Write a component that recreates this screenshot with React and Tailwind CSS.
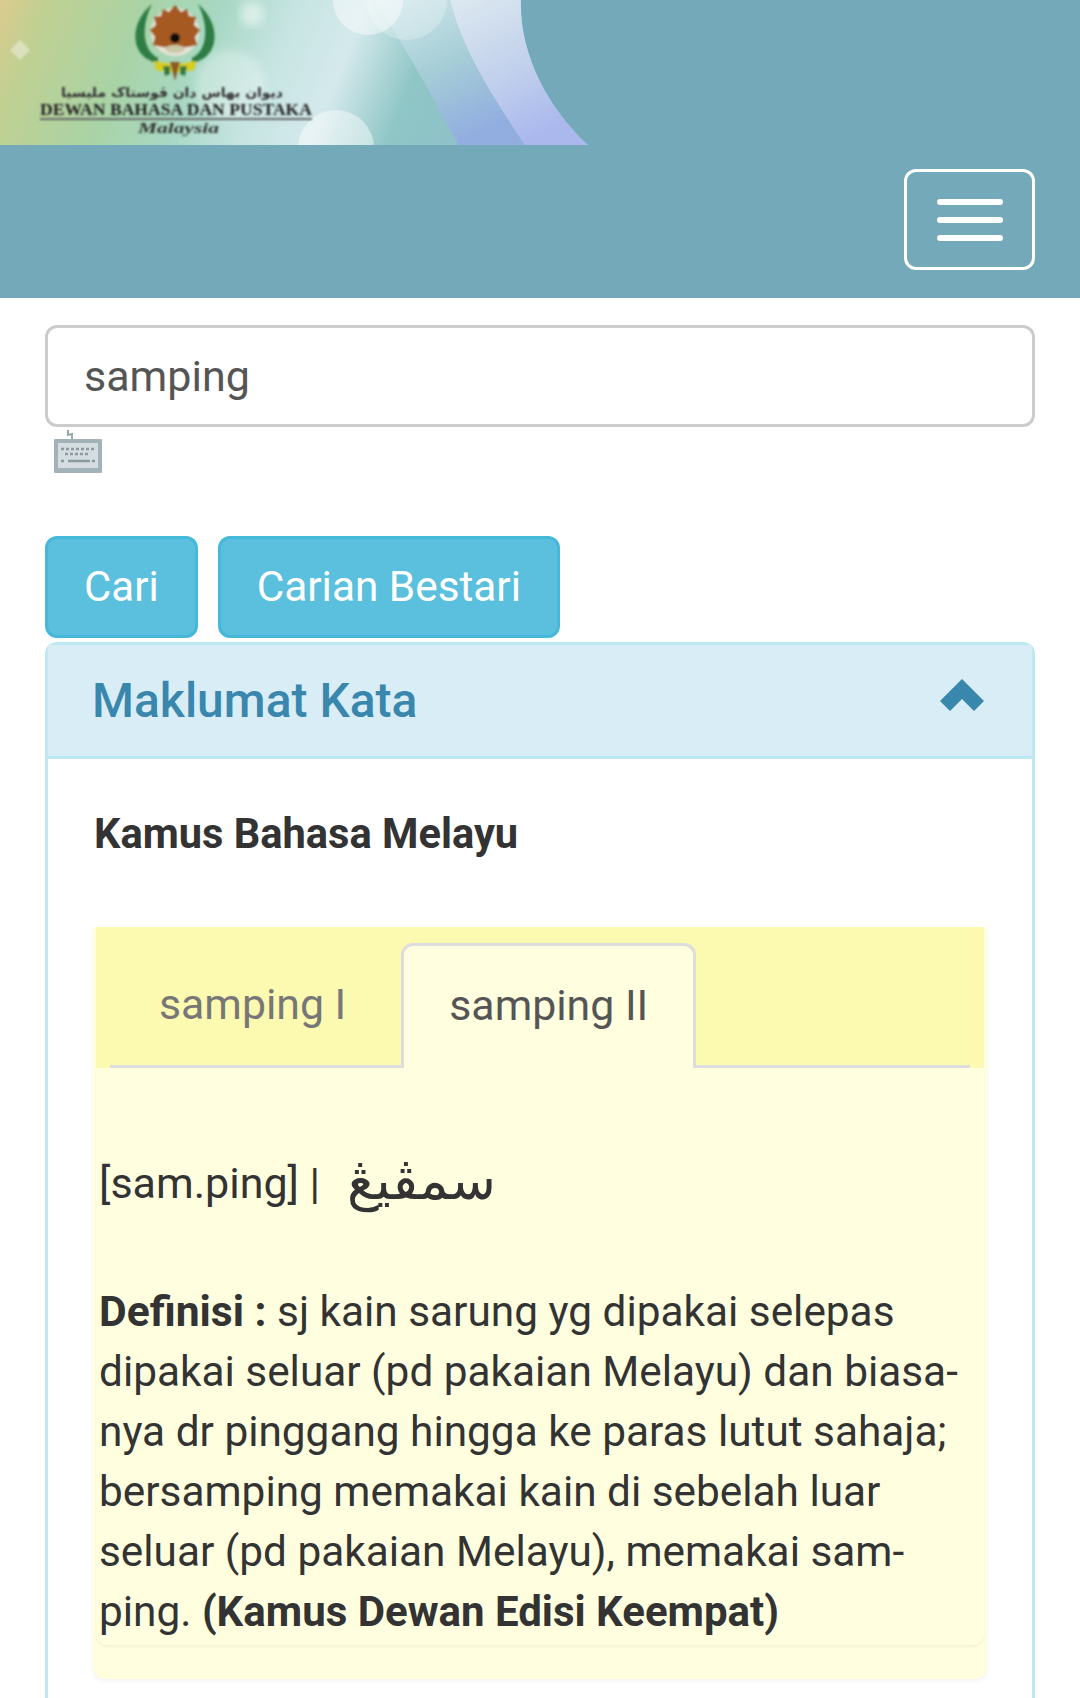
const Banner = () => (
  <svg width="588" height="145" viewBox="0 0 588 145" className="block">
    <defs>
      <linearGradient id="bg" x1="0" y1="0" x2="1" y2="0.1">
        <stop offset="0" stopColor="#dccb8e" />
        <stop offset="0.08" stopColor="#c0d092" />
        <stop offset="0.25" stopColor="#a9d3a6" />
        <stop offset="0.38" stopColor="#a8d8c4" />
        <stop offset="0.5" stopColor="#c6e4e2" />
        <stop offset="0.62" stopColor="#d5e9ec" />
        <stop offset="0.75" stopColor="#8fc6c6" />
        <stop offset="1" stopColor="#8fbccc" />
      </linearGradient>
      <linearGradient id="wave" x1="0" y1="0" x2="0.5" y2="1">
        <stop offset="0" stopColor="#dde9f0" />
        <stop offset="0.6" stopColor="#c0cfec" />
        <stop offset="1" stopColor="#aab8ee" />
      </linearGradient>
      <linearGradient id="wave2" x1="0" y1="0" x2="0.5" y2="1">
        <stop offset="0" stopColor="#d3e9ec" />
        <stop offset="0.55" stopColor="#a5cdd6" />
        <stop offset="1" stopColor="#92aee0" />
      </linearGradient>
      <filter id="soft"><feGaussianBlur stdDeviation="0.8" /></filter>
      <filter id="softer"><feGaussianBlur stdDeviation="5" /></filter>
    </defs>
    <path d="M0 0H521C519 50 545 105 588 145H0Z" fill="url(#bg)" />
    <path d="M375 0H450C462 50 495 100 525 145H458C430 90 400 40 375 0Z" fill="url(#wave2)" />
    <path d="M450 0H521C519 50 545 105 588 145H525C495 100 462 50 450 0Z" fill="url(#wave)" />
    <circle cx="368" cy="0" r="35" fill="#fff" opacity="0.45" />
    <circle cx="407" cy="0" r="40" fill="#fff" opacity="0.25" />
    <circle cx="336" cy="148" r="38" fill="#fff" opacity="0.45" />
    <circle cx="252" cy="14" r="12" fill="#fff" opacity="0.5" filter="url(#softer)" />
    <circle cx="230" cy="85" r="35" fill="#fff" opacity="0.3" filter="url(#softer)" />
    <path d="M20 40L30 50L20 60L10 50Z" fill="#fff" opacity="0.4" filter="url(#soft)" />
    <g filter="url(#soft)">
      <path d="M152 4C128 24 130 58 158 63L158 58C142 50 141 26 152 4Z" fill="#2f7d45" />
      <path d="M198 4C222 24 220 58 192 63L192 58C208 50 209 26 198 4Z" fill="#2f7d45" />
      <circle cx="175" cy="32" r="24" fill="#e8e4d6" />
      <path d="M175 5L181 12L187 9L189 16L196 17L194 25L200 30L195 37L197 45L188 47L175 48L162 47L153 45L155 37L150 30L156 25L154 17L161 16L163 9L169 12Z" fill="#a65a22" />
      <circle cx="175" cy="38" r="5" fill="#111" />
      <ellipse cx="175" cy="49" rx="10" ry="4" fill="#c9c8a8" />
      <path d="M154 61L170 64L180 64L196 61L194 70L180 72L170 72L156 70Z" fill="#d8cc1c" />
      <path d="M170 62H180L175 81Z" fill="#8a5a2a" />
      <path d="M163 66L170 66L170 74L165 76ZM187 66L180 66L180 74L185 76Z" fill="#2f7d45" />
      <text x="61" y="97" textLength="222" lengthAdjust="spacingAndGlyphs" fontFamily="DejaVu Sans" fontWeight="700" fontSize="13" fill="#333">ديوان بهاس دان ڤوستاک مليسيا</text>
      <text x="40" y="115" textLength="272" lengthAdjust="spacingAndGlyphs" fontFamily="Liberation Serif" fontWeight="700" fontSize="16" fill="#222">DEWAN BAHASA DAN PUSTAKA</text>
      <rect x="40" y="118" width="272" height="2" fill="#666" />
      <text x="138" y="133" textLength="81" lengthAdjust="spacingAndGlyphs" fontFamily="Liberation Serif" fontStyle="italic" fontWeight="700" fontSize="15" fill="#333">Malaysia</text>
    </g>
  </svg>
);

const KeyboardIcon = () => (
  <svg width="48" height="43" viewBox="0 0 48 43" className="block">
    <path d="M18 9V4L14 5V0" fill="none" stroke="#9aa9ae" strokeWidth="2" />
    <rect x="0" y="9" width="48" height="34" rx="1" fill="#a3b2b8" />
    <rect x="4" y="13" width="40" height="25" fill="#d5dde0" />
    <path d="M7 19H41M11 24H36" stroke="#8b9a9f" strokeWidth="2.5" strokeDasharray="3 2" />
    <path d="M7 31H10M14 31H36M38 31H41" stroke="#8b9a9f" strokeWidth="2.5" />
  </svg>
);

export default function App() {
  return (
    <div className="h-[1698px] overflow-hidden bg-white font-['Roboto',sans-serif] text-[42.35px] text-[#333]">
      <header className="h-[298px] bg-[#73a9b8]">
        <Banner />
        <div className="flex justify-end pr-[45px] pt-6">
          <button className="flex h-[101px] w-[131px] flex-col items-center justify-center gap-[12px] rounded-[12px] border-[3px] border-white">
            <span className="h-[6px] w-[66px] rounded-[3px] bg-white"></span>
            <span className="h-[6px] w-[66px] rounded-[3px] bg-white"></span>
            <span className="h-[6px] w-[66px] rounded-[3px] bg-white"></span>
          </button>
        </div>
      </header>

      <main className="px-[45px] pt-[27px]">
        <div className="flex h-[102px] items-center rounded-[12px] border-[3px] border-[#ccc] px-[36px] text-[43px] text-[#555]">
          samping
        </div>
        <div className="ml-[9px] mt-[3px]">
          <KeyboardIcon />
        </div>

        <div className="mt-[63px] flex gap-[20px]">
          <button className="h-[102px] rounded-[12px] border-[3px] border-[#46b8da] bg-[#5bc0de] px-[36px] pb-[1px] text-[42px] text-white">Cari</button>
          <button className="h-[102px] rounded-[12px] border-[3px] border-[#46b8da] bg-[#5bc0de] px-[36px] pb-[1px] text-white">Carian Bestari</button>
        </div>

        <section className="mt-[4px] rounded-t-[12px] border-[3px] border-b-0 border-[#bce8f1] pb-[200px]">
          <div className="flex h-[114px] items-center justify-between border-b-[3px] border-[#bce8f1] bg-[#d9edf7] pl-[44px] pr-[48px]">
            <h2 className="text-[48px] font-medium text-[#3a87ad]">Maklumat Kata</h2>
            <svg width="44" height="32" viewBox="0 0 44 32" className="-mt-[11px]">
              <path d="M22 0L44 22L34 32L22 20L10 32L0 22Z" fill="#3a87ad" />
            </svg>
          </div>

          <div className="px-[47px] pt-[45px]">
            <h3 className="-ml-[1px] text-[41.6px] font-bold leading-[60px]">Kamus Bahasa Melayu</h3>

            <div className="-mx-[2px] mt-[63px] rounded-b-[12px] bg-[#ffffe0] px-[3px] shadow-[0_2px_4px_rgba(0,0,0,0.05)]">
              <div className="bg-[#fcf9b0] px-[14px] pt-[16px]">
                <div className="flex h-[125px] border-b-[3px] border-[#ddd] text-[42.8px]">
                  <div className="mr-[6px] flex h-[125px] items-center px-[49px] pb-[3px] text-[#777]">samping I</div>
                  <div className="flex h-[125px] items-center rounded-t-[12px] border-[3px] border-b-0 border-[#ddd] bg-[#ffffe0] px-[45px] pb-[3px] text-[#555]">samping II</div>
                </div>
              </div>

              <div className="mb-[33px] rounded-b-[12px] px-[3px] pb-[3px] pt-[85px] leading-[60px] shadow-[0_2px_3px_rgba(0,0,0,0.05)]">
                <p className="flex h-[60px] items-center">
                  <span className="text-[43px]">[sam.ping] |</span>
                  <span dir="rtl" className="-mt-[5px] ml-[27px] font-['DejaVu_Sans',sans-serif] text-[54px] leading-[60px]">سمڤيڠ</span>
                </p>
                <p className="mt-[68px]">
                  <b className="text-[42.6px]">Definisi :</b> sj kain sarung yg dipakai selepas<br />
                  dipakai seluar (pd pakaian Melayu) dan biasa-<br />
                  nya dr pinggang hingga ke paras lutut sahaja;<br />
                  bersamping memakai kain di sebelah luar<br />
                  seluar (pd pakaian Melayu), memakai sam-<br />
                  ping. <b className="text-[42px]">(Kamus Dewan Edisi Keempat)</b>
                </p>
              </div>
              <div className="h-[1px]"></div>
            </div>
          </div>
        </section>
      </main>
    </div>
  );
}
